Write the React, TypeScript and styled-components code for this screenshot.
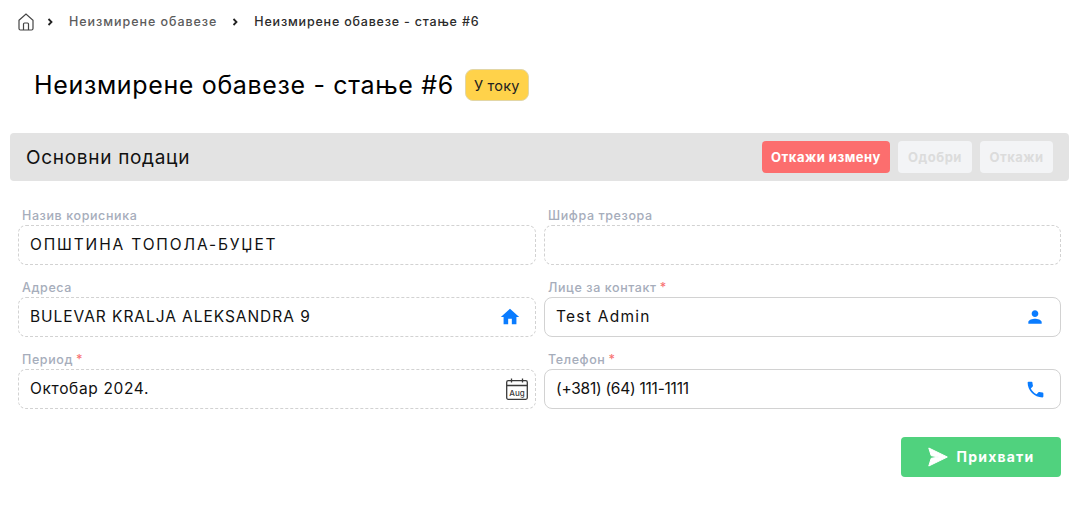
import React from 'react'
import styled, { createGlobalStyle } from 'styled-components'
import { MdHome, MdPerson, MdPhone } from 'react-icons/md'

const GlobalStyle = createGlobalStyle`
	html, body {
		margin: 0;
		padding: 0;
		background: #fff;
		font-family: 'Inter', 'DejaVu Sans', sans-serif;
		color: #000;
	}
`

const Page = styled.div`
	width: 1087px;
	height: 511px;
	box-sizing: border-box;
	padding: 12px 18px 0 10px;
	overflow: hidden;
`
const Crumbs = styled.nav`
	display: flex;
	align-items: center;
	height: 20px;
	padding-left: 8px;
	font-size: 12.5px;
	font-weight: 500;
`
const HomeLink = styled.span`
	display: flex;
	width: 16px;
	height: 18px;
	color: #444;
`
const Chevron = styled.svg<{ $first?: boolean }>`
	width: 6px;
	height: 8px;
	margin: 0 16px 0 ${(p) => (p.$first ? '13px' : '15px')};
	fill: none;
	stroke: #222;
	stroke-width: 1.8;
`
const Crumb = styled.span<{ $current?: boolean }>`
	padding-bottom: 1px;
	color: ${(p) => (p.$current ? '#2b2b2b' : '#5c5c5c')};
	letter-spacing: ${(p) => (p.$current ? '0.8px' : '0.95px')};
	white-space: nowrap;
`
const TitleRow = styled.div`
	display: flex;
	align-items: center;
	height: 34px;
	margin-top: 36px;
	padding-left: 24px;
`
const Title = styled.h1`
	margin: 0;
	font-size: 25px;
	font-weight: 400;
	letter-spacing: 0.65px;
	line-height: 32px;
	white-space: nowrap;
`
const Badge = styled.span`
	display: flex;
	align-items: center;
	justify-content: center;
	width: 62px;
	height: 30px;
	margin-left: 11px;
	border: 1px solid #e2d6a6;
	border-radius: 8px;
	background: #ffd24a;
	font-size: 14.5px;
	letter-spacing: 0.2px;
	color: #222;
`
const SectionBar = styled.div`
	display: flex;
	align-items: center;
	justify-content: space-between;
	height: 48px;
	margin-top: 31px;
	padding: 0 16px;
	box-sizing: border-box;
	border-radius: 4px;
	background: #e3e3e3;
`
const SectionTitle = styled.h2`
	margin: 0;
	font-size: 19px;
	font-weight: 400;
	letter-spacing: 0.7px;
	color: #111;
`
const Actions = styled.div`
	display: flex;
	gap: 8px;
`
const ActionButton = styled.button<{ $width: number; $active?: boolean }>`
	width: ${(p) => p.$width}px;
	height: 32px;
	padding: 0;
	border: 0;
	border-radius: 4px;
	font-family: inherit;
	font-size: 13px;
	font-weight: 700;
	letter-spacing: 0.5px;
	background: ${(p) => (p.$active ? '#fc6e6e' : '#f3f4f6')};
	color: ${(p) => (p.$active ? '#fff' : '#dcdcdc')};
`
const Form = styled.div`
	display: grid;
	grid-template-columns: 518px 517px;
	column-gap: 8px;
	row-gap: 15px;
	margin: 27px 0 0 8px;
`
const Field = styled.div`
	display: flex;
	flex-direction: column;
`
const Label = styled.label`
	height: 17px;
	padding-left: 4px;
	font-size: 12.5px;
	font-weight: 500;
	line-height: 16px;
	letter-spacing: 0.6px;
	color: #a6adbb;
`
const Required = styled.span`
	margin-left: 3px;
	color: #f87272;
`
const InputBox = styled.div<{ $disabled?: boolean }>`
	display: flex;
	align-items: center;
	justify-content: space-between;
	height: 40px;
	box-sizing: border-box;
	padding: 0 8px 0 11px;
	border: 1px ${(p) => (p.$disabled ? 'dashed' : 'solid')} #d2d2d2;
	border-radius: 8px;
`
const Value = styled.span<{ $tracking: number }>`
	padding-bottom: 2px;
	font-size: 15.5px;
	letter-spacing: ${(p) => p.$tracking}px;
	color: #111;
	white-space: nowrap;
`
const IconSlot = styled.span<{ $color?: string }>`
	display: flex;
	align-items: center;
	justify-content: center;
	width: 24px;
	height: 24px;
	margin-right: ${(p) => (p.$color ? '5px' : '-2px')};
	color: ${(p) => p.$color || '#444'};
`
const Footer = styled.div`
	display: flex;
	justify-content: flex-end;
	margin-top: 28px;
	width: 1051px;
`
const SubmitButton = styled.button`
	display: flex;
	align-items: center;
	justify-content: center;
	gap: 9px;
	width: 160px;
	height: 40px;
	padding: 0 0 1px;
	border: 0;
	border-radius: 4px;
	background: #50d27e;
	color: #fff;
	font-family: inherit;
	font-size: 14px;
	font-weight: 700;
	letter-spacing: 1.2px;
`

const HomeOutline = () => (
	<svg width="16" height="18" viewBox="0 0 16 18" fill="none" stroke="currentColor" strokeWidth="1.2">
		<path d="M1 7.2 8 1l7 6.2V15.5a1.5 1.5 0 0 1-1.5 1.5h-11A1.5 1.5 0 0 1 1 15.500z" />
		<path d="M5.500 17v-6a1 1 0 0 1 1-1h3a1 1 0 0 1 1 1v6" />
	</svg>
)

const CalendarIcon = () => (
	<svg width="22" height="22" viewBox="0 0 22 22" fill="none" stroke="#3a3a3a" strokeWidth="1.3">
		<rect x="0.7" y="2.700" width="20.600" height="18.600" rx="1.500" />
		<path d="M0.7 7.500h20.600M5.500 0.500v4M16.500 0.500v4" />
		<text x="11" y="17.500" textAnchor="middle" fontSize="8" fontWeight="500" fontFamily="Inter, sans-serif" fill="#3a3a3a" stroke="none">
			Aug
		</text>
	</svg>
)

const SendIcon = () => (
	<svg width="20" height="20" viewBox="0 0 20 20" fill="#fff" stroke="#fff" strokeWidth="1" strokeLinejoin="round">
		<path d="M0.800 1 19.300 10 0.800 19 3.200 11.300 11 10 3.200 8.700z" />
	</svg>
)

const ChevronRight = ({ first }: { first?: boolean }) => (
	<Chevron viewBox="0 0 6 8" $first={first}>
		<path d="M1.500 1l3 3-3 3" />
	</Chevron>
)

export default function App() {
	return (
		<Page>
			<GlobalStyle />
			<Crumbs>
				<HomeLink>
					<HomeOutline />
				</HomeLink>
				<ChevronRight first />
				<Crumb>Неизмирене обавезе</Crumb>
				<ChevronRight />
				<Crumb $current>Неизмирене обавезе - стање #6</Crumb>
			</Crumbs>
			<TitleRow>
				<Title>Неизмирене обавезе - стање #6</Title>
				<Badge>У току</Badge>
			</TitleRow>
			<SectionBar>
				<SectionTitle>Основни подаци</SectionTitle>
				<Actions>
					<ActionButton $width={128} $active>
						Откажи измену
					</ActionButton>
					<ActionButton $width={74}>Одобри</ActionButton>
					<ActionButton $width={73}>Откажи</ActionButton>
				</Actions>
			</SectionBar>
			<Form>
				<Field>
					<Label>Назив корисника</Label>
					<InputBox $disabled>
						<Value $tracking={1.85}>ОПШТИНА ТОПОЛА-БУЏЕТ</Value>
					</InputBox>
				</Field>
				<Field>
					<Label>Шифра трезора</Label>
					<InputBox $disabled />
				</Field>
				<Field>
					<Label>Адреса</Label>
					<InputBox $disabled>
						<Value $tracking={0.95}>BULEVAR KRALJA ALEKSANDRA 9</Value>
						<IconSlot $color="#0a7cff">
							<MdHome size={22} />
						</IconSlot>
					</InputBox>
				</Field>
				<Field>
					<Label>
						Лице за контакт<Required>*</Required>
					</Label>
					<InputBox>
						<Value $tracking={1.25}>Test Admin</Value>
						<IconSlot $color="#0a7cff">
							<MdPerson size={20} />
						</IconSlot>
					</InputBox>
				</Field>
				<Field>
					<Label>
						Период<Required>*</Required>
					</Label>
					<InputBox $disabled>
						<Value $tracking={0.65}>Октобар 2024.</Value>
						<IconSlot>
							<CalendarIcon />
						</IconSlot>
					</InputBox>
				</Field>
				<Field>
					<Label>
						Телефон<Required>*</Required>
					</Label>
					<InputBox>
						<Value $tracking={-0.25}>(+381) (64) 111-1111</Value>
						<IconSlot $color="#0a7cff">
							<MdPhone size={21} />
						</IconSlot>
					</InputBox>
				</Field>
			</Form>
			<Footer>
				<SubmitButton>
					<SendIcon />
					Прихвати
				</SubmitButton>
			</Footer>
		</Page>
	)
}
